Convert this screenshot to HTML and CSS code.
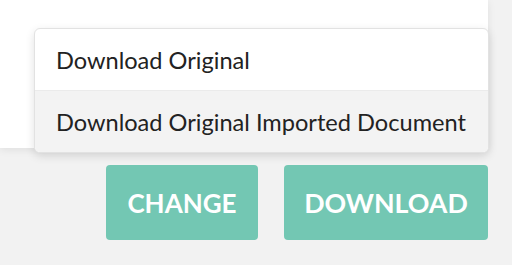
FILE: index.html
```html
<!DOCTYPE html>
<html>
<head>
<meta charset="utf-8">
<link rel="stylesheet" href="styles.css">
</head>
<body>
<div class="page">
  <div class="panel"></div>
  <div class="menu">
    <div class="menu-item">Download Original</div>
    <div class="menu-item alt">Download Original Imported Document</div>
  </div>
  <div class="actions">
    <button class="btn btn-change">CHANGE</button>
    <button class="btn btn-download">DOWNLOAD</button>
  </div>
</div>
</body>
</html>
```
FILE: styles.css
```css
html, body {
  margin: 0;
  padding: 0;
  background: #f2f2f2;
  font-family: Lato, "Liberation Sans", sans-serif;
}
.page {
  position: relative;
  width: 512px;
  height: 265px;
  overflow: hidden;
}
.panel {
  width: 488px;
  height: 148px;
  background: #fff;
  box-shadow: 0 2px 8px rgba(0,0,0,0.08);
}
.menu {
  position: absolute;
  left: 34px;
  top: 28px;
  width: 453px;
  background: #fff;
  border: 1px solid #e2e2e2;
  border-radius: 6px;
  box-shadow: 0 3px 10px rgba(0,0,0,0.12);
  overflow: hidden;
}
.menu-item {
  height: 61px;
  display: flex;
  align-items: center;
  padding-left: 21px;
  font-size: 23.6px;
  color: #222;
}
.menu-item.alt {
  background: #f3f3f3;
  border-top: 1px solid #ebebeb;
}
.actions {
  display: flex;
  justify-content: flex-end;
  gap: 26px;
  padding-right: 24px;
  margin-top: 17px;
}
.btn {
  height: 75px;
  border: none;
  border-radius: 4px;
  background: #73c7b3;
  color: #fff;
  font-family: Lato, "Liberation Sans", sans-serif;
  font-weight: 700;
  font-size: 26px;
  padding: 0;
}
.btn-change { width: 152px; }
.btn-download { width: 204px; font-size: 26.8px; }
```
